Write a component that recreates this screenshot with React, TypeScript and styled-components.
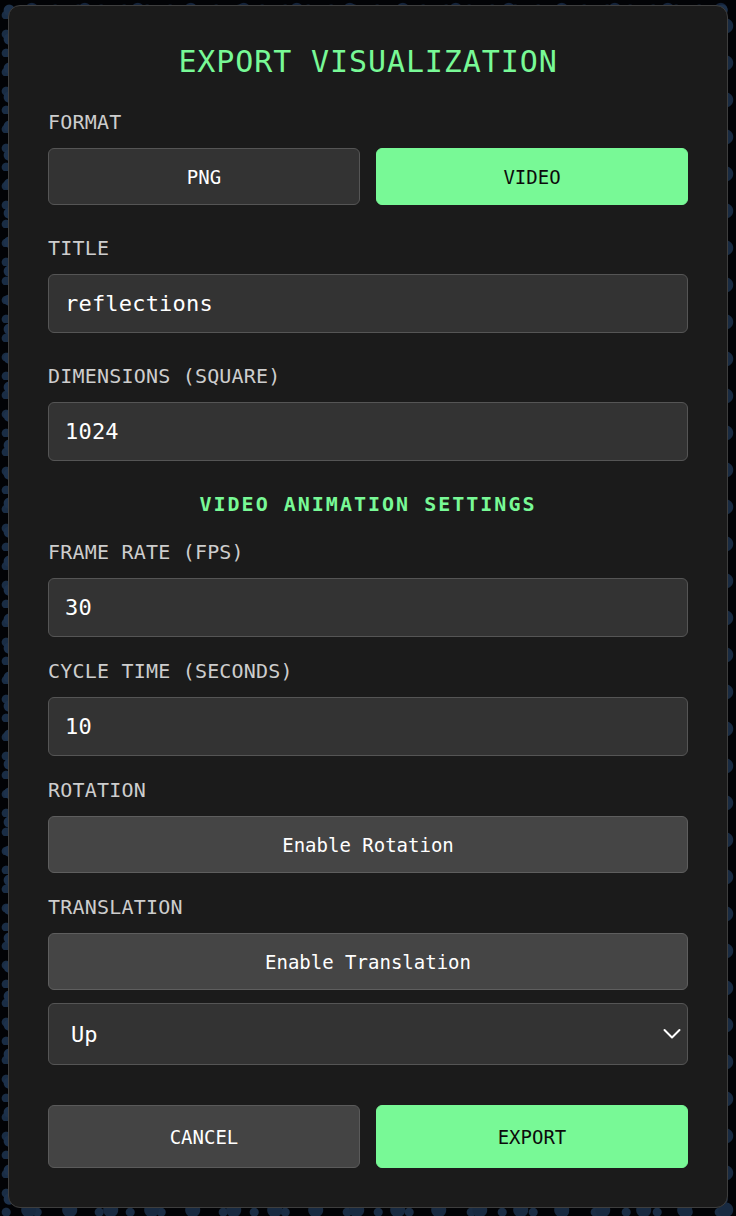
import React, { useState } from 'react';
import styled, { createGlobalStyle } from 'styled-components';

const GlobalStyle = createGlobalStyle`
  html, body {
    margin: 0;
    padding: 0;
    background: #000;
  }
  body {
    font-family: "DejaVu Sans Mono", Menlo, monospace;
  }
  *, *::before, *::after {
    box-sizing: border-box;
  }
`;

const Backdrop = styled.div`
  min-height: 1216px;
  padding: 5px 8px 8px;
  background-color: #020306;
  background-image:
    radial-gradient(circle at 40% 35%, #1d314b 0 5px, transparent 6px),
    radial-gradient(circle at 70% 70%, #182a41 0 7px, transparent 8px),
    radial-gradient(circle at 20% 80%, #1a2d45 0 4px, transparent 5px),
    radial-gradient(circle at 60% 20%, #14233a 0 6px, transparent 7px);
  background-size: 23px 29px, 41px 37px, 31px 19px, 53px 47px;
`;

const Modal = styled.div`
  width: 720px;
  background: #1b1b1b;
  border: 1px solid #3e3e3e;
  border-radius: 12px;
  padding: 39px;
  display: flex;
  flex-direction: column;
`;

const Title = styled.h2`
  margin: 0 0 30px;
  font-size: 30px;
  line-height: 34px;
  font-weight: normal;
  letter-spacing: 0.9px;
  text-align: center;
  color: #78f996;
`;

const SectionHeading = styled.h3`
  margin: 30px 0 22px;
  font-size: 20px;
  line-height: 26px;
  font-weight: bold;
  letter-spacing: 2px;
  text-align: center;
  color: #78f996;
`;

const Field = styled.div<{ $space: number }>`
  display: flex;
  flex-direction: column;
  margin-bottom: ${(p) => p.$space}px;
`;

const Label = styled.label`
  display: block;
  margin-bottom: 12px;
  font-size: 20px;
  line-height: 27px;
  letter-spacing: 0.2px;
  color: #cdcdcd;
`;

const TwoCol = styled.div<{ $top?: number }>`
  display: grid;
  grid-template-columns: 1fr 1fr;
  gap: 16px;
  margin-top: ${(p) => p.$top ?? 0}px;
`;

const ChoiceButton = styled.button<{ $active?: boolean; $tall?: boolean }>`
  height: ${(p) => (p.$tall ? 63 : 57)}px;
  border-radius: 6px;
  border: 1px solid ${(p) => (p.$active ? '#78f996' : '#555')};
  background: ${(p) => (p.$active ? '#78f996' : '#333')};
  color: ${(p) => (p.$active ? '#0c0c0c' : '#fff')};
  font-family: inherit;
  font-size: 19px;
  cursor: pointer;
`;

const ActionButton = styled(ChoiceButton)`
  background: ${(p) => (p.$active ? '#78f996' : '#444')};
  border-color: ${(p) => (p.$active ? '#78f996' : '#5a5a5a')};
`;

const ToggleButton = styled.button`
  height: 57px;
  width: 100%;
  border-radius: 6px;
  border: 1px solid #5e5e5e;
  background: #454545;
  color: #fff;
  font-family: inherit;
  font-size: 19px;
  cursor: pointer;
`;

const TextInput = styled.input`
  height: 59px;
  width: 100%;
  padding: 0 16px;
  border-radius: 6px;
  border: 1px solid #555;
  background: #333;
  color: #fff;
  font-family: inherit;
  font-size: 22px;
  letter-spacing: 0.2px;
  outline: none;
`;

const SelectWrap = styled.div`
  position: relative;
  margin-top: 13px;
`;

const Select = styled.select`
  appearance: none;
  -webkit-appearance: none;
  height: 62px;
  width: 100%;
  padding: 0 48px 0 22px;
  border-radius: 6px;
  border: 1px solid #555;
  background: #333;
  color: #fff;
  font-family: inherit;
  font-size: 22px;
  outline: none;
`;

const Chevron = styled.svg`
  position: absolute;
  right: 7px;
  top: 50%;
  transform: translateY(-50%);
  pointer-events: none;
`;

export default function App() {
  const [format, setFormat] = useState<'png' | 'video'>('video');
  return (
    <>
      <GlobalStyle />
      <Backdrop>
        <Modal>
          <Title>EXPORT VISUALIZATION</Title>

          <Field $space={30}>
            <Label>FORMAT</Label>
            <TwoCol>
              <ChoiceButton $active={format === 'png'} onClick={() => setFormat('png')}>
                PNG
              </ChoiceButton>
              <ChoiceButton $active={format === 'video'} onClick={() => setFormat('video')}>
                VIDEO
              </ChoiceButton>
            </TwoCol>
          </Field>

          <Field $space={30}>
            <Label>TITLE</Label>
            <TextInput defaultValue="reflections" />
          </Field>

          <Field $space={0}>
            <Label>DIMENSIONS (SQUARE)</Label>
            <TextInput defaultValue="1024" />
          </Field>

          <SectionHeading>VIDEO ANIMATION SETTINGS</SectionHeading>

          <Field $space={21}>
            <Label>FRAME RATE (FPS)</Label>
            <TextInput defaultValue="30" />
          </Field>

          <Field $space={21}>
            <Label>CYCLE TIME (SECONDS)</Label>
            <TextInput defaultValue="10" />
          </Field>

          <Field $space={21}>
            <Label>ROTATION</Label>
            <ToggleButton>Enable Rotation</ToggleButton>
          </Field>

          <Field $space={0}>
            <Label>TRANSLATION</Label>
            <ToggleButton>Enable Translation</ToggleButton>
            <SelectWrap>
              <Select defaultValue="up">
                <option value="up">Up</option>
                <option value="down">Down</option>
                <option value="left">Left</option>
                <option value="right">Right</option>
              </Select>
              <Chevron width="18" height="11" viewBox="0 0 18 11" fill="none">
                <polyline
                  points="1.5,1.5 9,9 16.5,1.5"
                  stroke="#fff"
                  strokeWidth="2"
                  strokeLinecap="round"
                  strokeLinejoin="round"
                />
              </Chevron>
            </SelectWrap>
          </Field>

          <TwoCol $top={40}>
            <ActionButton $tall>CANCEL</ActionButton>
            <ActionButton $tall $active>
              EXPORT
            </ActionButton>
          </TwoCol>
        </Modal>
      </Backdrop>
    </>
  );
}
